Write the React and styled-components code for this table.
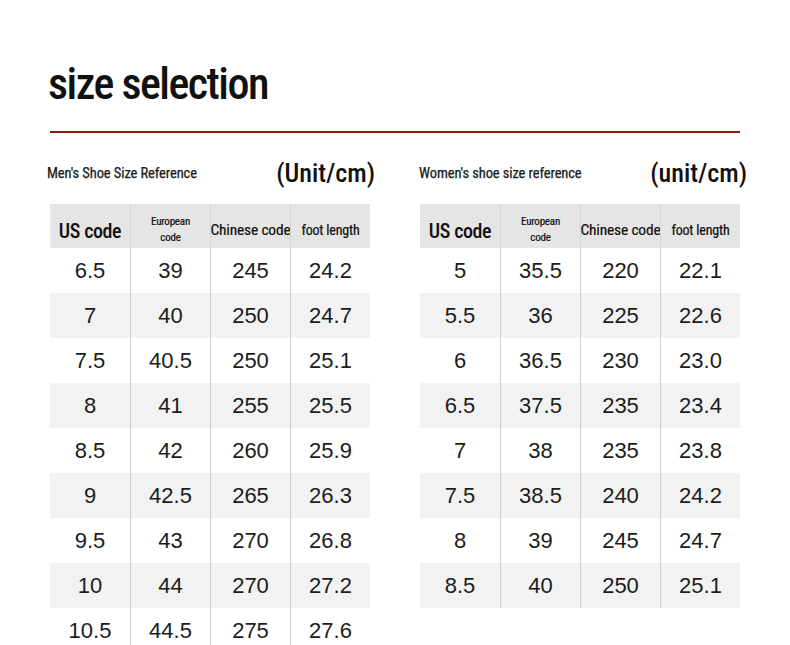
import styled, { createGlobalStyle } from 'styled-components';

const GlobalStyle = createGlobalStyle`
  html, body {
    margin: 0;
    padding: 0;
    background: #fff;
  }
  body {
    font-family: "Liberation Sans", Arial, sans-serif;
    overflow: hidden;
  }
`;

const condensed = `"Roboto Condensed", "Liberation Sans Narrow", "DejaVu Sans Condensed", "Liberation Sans", sans-serif`;

const Page = styled.div`
  width: 790px;
  height: 645px;
  padding-top: 58px;
  box-sizing: border-box;
`;

const Title = styled.h1`
  margin: 0 0 0 48px;
  font-family: ${condensed};
  font-weight: 500;
  font-size: 44px;
  line-height: 52px;
  color: #111;
  letter-spacing: -1.5px;
`;

const Divider = styled.div`
  margin: 21px 0 0 50px;
  width: 690px;
  height: 2px;
  background: #8a1a0c;
`;

const Panels = styled.div`
  display: grid;
  grid-template-columns: 330px 330px;
  column-gap: 42px;
  margin: 24px 0 0 47px;
`;

const Panel = styled.div`
  display: flex;
  flex-direction: column;
`;

const Caption = styled.div`
  display: flex;
  justify-content: space-between;
  align-items: center;
  height: 32px;
  padding-right: 2px;
`;

const CaptionText = styled.span`
  font-family: ${condensed};
  font-size: 14.5px;
  font-weight: 400;
  letter-spacing: -0.1px;
  color: #1a1a1a;
  -webkit-text-stroke: 0.25px #1a1a1a;
`;

const Unit = styled.span`
  font-family: ${condensed};
  font-size: 26px;
  font-weight: 500;
  color: #111;
`;

const Table = styled.div`
  margin: 15px 0 0 ${({ $offset }) => $offset}px;
  width: 320px;
  display: grid;
  grid-template-columns: repeat(4, 80px);
`;

const HeadCell = styled.div`
  height: 44px;
  padding-top: ${({ $size }) => ($size > 18 ? 10 : 7)}px;
  box-sizing: border-box;
  background: #e5e5e5;
  display: flex;
  align-items: center;
  justify-content: center;
  text-align: center;
  white-space: nowrap;
  font-family: ${condensed};
  font-weight: ${({ $size }) => ($size > 18 ? 500 : 400)};
  font-size: ${({ $size }) => $size}px;
  letter-spacing: ${({ $size }) => ($size > 18 ? -0.4 : -0.2)}px;
  line-height: ${({ $size }) => ($size < 13 ? 16 : 20)}px;
  color: #111;
  -webkit-text-stroke: ${({ $size }) => ($size > 18 ? 0 : 0.2)}px #111;
  border-left: ${({ $first }) => ($first ? 'none' : '1px solid #d6d6d6')};
`;

const Cell = styled.div`
  height: 45px;
  display: flex;
  align-items: center;
  justify-content: center;
  font-size: 22px;
  color: #1c1c1c;
  background: ${({ $shade }) => ($shade ? '#f2f2f2' : '#fff')};
  border-left: ${({ $first }) => ($first ? 'none' : '1px solid #cfcfcf')};
`;

const heads = [
  { label: 'US code', size: 20 },
  { label: ['European', 'code'], size: 11 },
  { label: 'Chinese code', size: 15.5 },
  { label: 'foot length', size: 14 },
];

const men = [
  ['6.5', '39', '245', '24.2'],
  ['7', '40', '250', '24.7'],
  ['7.5', '40.5', '250', '25.1'],
  ['8', '41', '255', '25.5'],
  ['8.5', '42', '260', '25.9'],
  ['9', '42.5', '265', '26.3'],
  ['9.5', '43', '270', '26.8'],
  ['10', '44', '270', '27.2'],
  ['10.5', '44.5', '275', '27.6'],
];

const women = [
  ['5', '35.5', '220', '22.1'],
  ['5.5', '36', '225', '22.6'],
  ['6', '36.5', '230', '23.0'],
  ['6.5', '37.5', '235', '23.4'],
  ['7', '38', '235', '23.8'],
  ['7.5', '38.5', '240', '24.2'],
  ['8', '39', '245', '24.7'],
  ['8.5', '40', '250', '25.1'],
];

const SizeTable = ({ rows, offset }) => (
  <Table $offset={offset}>
    {heads.map((h, i) => (
      <HeadCell key={i} $size={h.size} $first={i === 0}>
        {Array.isArray(h.label) ? (
          <span>
            {h.label[0]}
            <br />
            {h.label[1]}
          </span>
        ) : (
          h.label
        )}
      </HeadCell>
    ))}
    {rows.map((row, r) =>
      row.map((v, c) => (
        <Cell key={`${r}-${c}`} $shade={r % 2 === 1} $first={c === 0}>
          {v}
        </Cell>
      ))
    )}
  </Table>
);

export default function App() {
  return (
    <>
      <GlobalStyle />
      <Page>
        <Title>size selection</Title>
        <Divider />
        <Panels>
          <Panel>
            <Caption>
              <CaptionText>Men's Shoe Size Reference</CaptionText>
              <Unit>(Unit/cm)</Unit>
            </Caption>
            <SizeTable rows={men} offset={3} />
          </Panel>
          <Panel>
            <Caption>
              <CaptionText>Women's shoe size reference</CaptionText>
              <Unit>(unit/cm)</Unit>
            </Caption>
            <SizeTable rows={women} offset={1} />
          </Panel>
        </Panels>
      </Page>
    </>
  );
}
